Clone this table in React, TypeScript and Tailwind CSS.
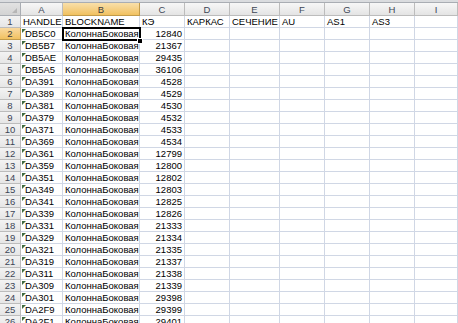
import React from 'react'

const cols = ['A', 'B', 'C', 'D', 'E', 'F', 'G', 'H', 'I']

const header = ['HANDLE', 'BLOCKNAME', 'КЭ', 'КАРКАС', 'СЕЧЕНИЕ', 'AU', 'AS1', 'AS3', '']

const data: [string, number][] = [
  ['DB5C0', 12840],
  ['DB5B7', 21367],
  ['DB5AE', 29435],
  ['DB5A5', 36106],
  ['DA391', 4528],
  ['DA389', 4529],
  ['DA381', 4530],
  ['DA379', 4532],
  ['DA371', 4533],
  ['DA369', 4534],
  ['DA361', 12799],
  ['DA359', 12800],
  ['DA351', 12802],
  ['DA349', 12803],
  ['DA341', 12825],
  ['DA339', 12826],
  ['DA331', 21333],
  ['DA329', 21334],
  ['DA321', 21335],
  ['DA319', 21337],
  ['DA311', 21338],
  ['DA309', 21339],
  ['DA301', 29398],
  ['DA2F9', 29399],
  ['DA2F1', 29401],
]

const grid = 'grid grid-cols-[21px_42px_77px_45px_45px_50px_45px_45px_45px_1fr]'
const cell = 'h-[12px] border-r border-b border-[#d0d7e5] bg-white px-[2px] text-[9.5px] leading-[11px] text-black whitespace-nowrap overflow-hidden'

function RowHead({ n, active }: { n: number; active?: boolean }) {
  return (
    <div
      className={`h-[12px] border-r border-b flex items-center justify-center text-[9.5px] leading-[11px] ${
        active
          ? 'bg-gradient-to-b from-[#f9d99f] to-[#f1c15f] border-[#c29b4a] text-[#3d3d3d]'
          : 'bg-gradient-to-b from-[#f3f3f3] to-[#e6e6e6] border-[#bcbcbc] text-[#3d4656]'
      }`}
    >
      {n}
    </div>
  )
}

export default function App() {
  return (
    <div className="relative w-[458px] h-[323px] overflow-hidden bg-white select-none" style={{ fontFamily: '"Liberation Sans", Arial, sans-serif' }}>
      <div className="h-[3px] bg-[#dadcdf] border-b border-[#a9adb3]" />

      {/* column headers */}
      <div className={grid}>
        <div className="h-[13px] border-r border-b border-[#a9adb3] bg-gradient-to-b from-[#e2e2e2] to-[#d3d3d3] relative">
          <div className="absolute right-[3px] bottom-[2px] w-0 h-0 border-l-[5px] border-l-transparent border-b-[5px] border-b-[#b6b6b6]" />
        </div>
        {cols.map((c) => (
          <div
            key={c}
            className={`h-[13px] border-r border-b flex items-center justify-center text-[9.5px] leading-[11px] ${
              c === 'B'
                ? 'bg-gradient-to-b from-[#f9dfa9] to-[#f1c15f] border-[#c29b4a] text-[#3d3d3d]'
                : 'bg-gradient-to-b from-[#f7f7f7] to-[#e4e4e4] border-[#bcbcbc] text-[#3d4656]'
            }`}
          >
            {c}
          </div>
        ))}

        {/* row 1 */}
        <RowHead n={1} />
        {header.map((h, i) => (
          <div key={i} className={`${cell} flex items-center`}>
            {h}
          </div>
        ))}

        {data.map(([handle, ke], i) => (
          <React.Fragment key={handle}>
            <RowHead n={i + 2} active={i === 0} />
            <div className={`${cell} relative flex items-center`}>
              <div className="absolute left-[1px] top-[1px] w-0 h-0 border-t-[4px] border-t-[#3f6a3f] border-r-[4px] border-r-transparent" />
              <span className="pl-[2px]">{handle}</span>
            </div>
            <div className={`${cell} flex items-center`}>КолоннаБоковая</div>
            <div className={`${cell} flex items-center justify-end`}>{ke}</div>
            {[0, 1, 2, 3, 4, 5].map((k) => (
              <div key={k} className={cell} />
            ))}
          </React.Fragment>
        ))}
      </div>

      {/* selection on B2 */}
      <div className="absolute left-[62px] top-[27px] w-[79px] h-[14px] border-2 border-black pointer-events-none" />
      <div className="absolute left-[137px] top-[38px] w-[6px] h-[6px] bg-black border border-white pointer-events-none" />
    </div>
  )
}
